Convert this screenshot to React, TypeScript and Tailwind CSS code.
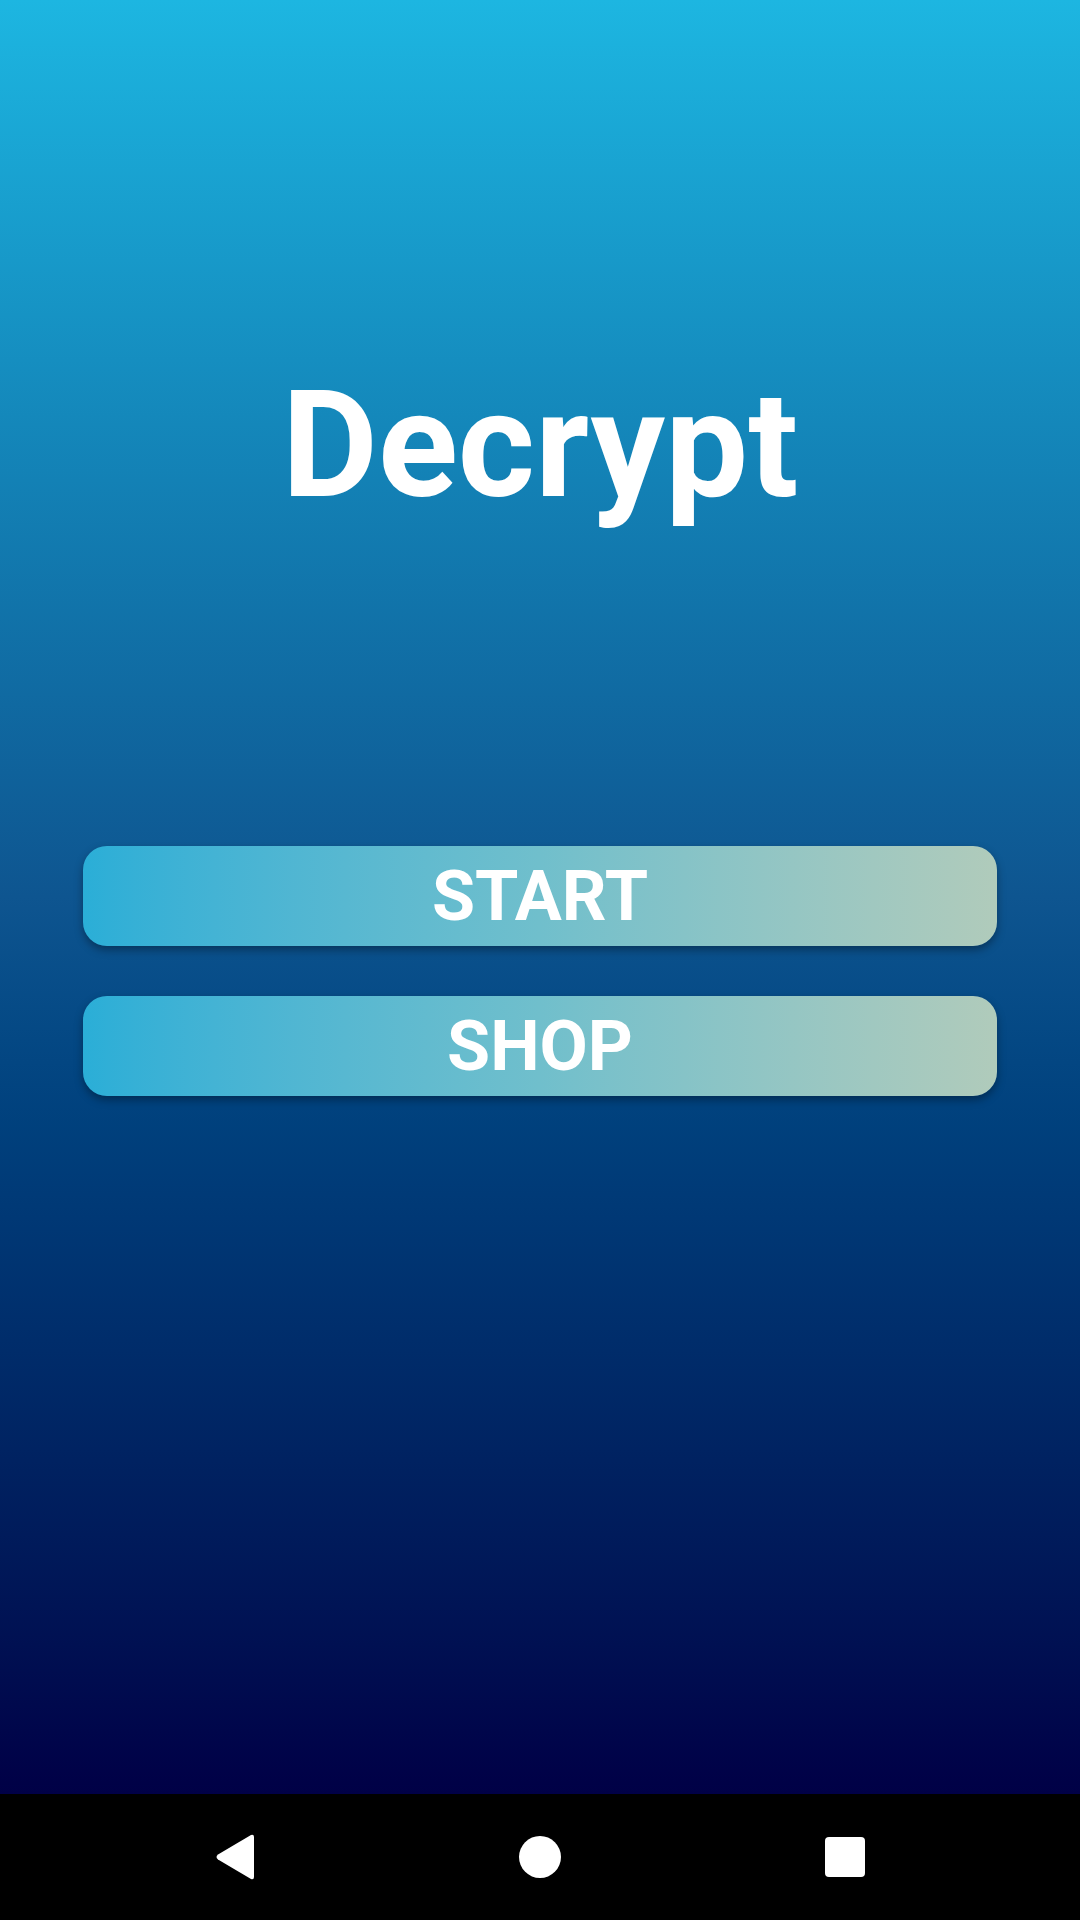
import React from 'react';

const MenuButton: React.FC<{ label: string }> = ({ label }) => (
  <button
    type="button"
    className="w-full h-[100px] rounded-[24px] bg-gradient-to-r from-[#2aaed7] via-[#70bfcc] to-[#b0cbbb] shadow-[0_4px_8px_rgba(0,0,0,0.35)] text-white font-bold text-[70px] leading-none flex items-center justify-center"
  >
    {label}
  </button>
);

const App: React.FC = () => {
  return (
    <div className="w-[1080px] h-[1920px] flex flex-col font-['Roboto',sans-serif]">
      <div className="flex-1 flex flex-col items-center bg-gradient-to-b from-[#1db6e1] via-[#0e5590] to-[#000046] px-[83px]">
        <h1 className="mt-[372px] text-white font-bold text-[148px] leading-none">Decrypt</h1>
        <div className="mt-[326px] w-full flex flex-col gap-[50px]">
          <MenuButton label="START" />
          <MenuButton label="SHOP" />
        </div>
      </div>
      <div className="h-[126px] bg-black flex items-center justify-center gap-[261px]">
        <div className="w-[44px] h-[48px] flex items-center justify-center">
          <svg width="40" height="46" viewBox="0 0 40 46">
            <path d="M36 1 L3 20.5 Q0 23 3 25.5 L36 45 Q39 46 39 43 L39 3 Q39 0 36 1 Z" fill="white" />
          </svg>
        </div>
        <div className="w-[44px] h-[48px] flex items-center justify-center">
          <div className="w-[42px] h-[42px] rounded-full bg-white" />
        </div>
        <div className="w-[44px] h-[48px] flex items-center justify-center">
          <div className="w-[40px] h-[40px] rounded-[4px] bg-white" />
        </div>
      </div>
    </div>
  );
};

export default App;
